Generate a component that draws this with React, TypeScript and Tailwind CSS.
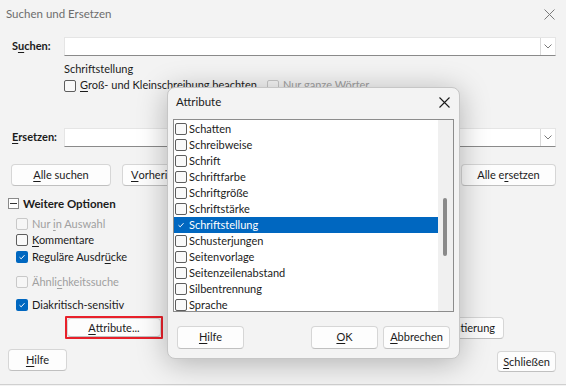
import React from "react";

const F = { fontFamily: 'Lato, "Noto Sans", sans-serif' };

function U({ c }: { c: string }) {
  return <span className="underline underline-offset-2 decoration-1">{c}</span>;
}

function Box({ checked, disabled }: { checked?: boolean; disabled?: boolean }) {
  if (checked)
    return (
      <span className="flex h-[12px] w-[12px] shrink-0 items-center justify-center rounded-[2px] bg-[#0067c0]">
        <svg width="8" height="8" viewBox="0 0 8 8">
          <path d="M1.5 4.2 L3.2 5.8 L6.5 2.2" stroke="#fff" strokeWidth="1" fill="none" />
        </svg>
      </span>
    );
  return (
    <span
      className={
        "block h-[12px] w-[12px] shrink-0 rounded-[2px] border " +
        (disabled ? "border-[#c8c8c8] bg-[#f6f6f6]" : "border-[#5d5d5d] bg-[#f9f9f9]")
      }
    />
  );
}

function Btn({ children, className }: { children: React.ReactNode; className?: string }) {
  return (
    <div
      className={
        "flex items-center justify-center whitespace-nowrap rounded-[4px] border border-[#d6d6d6] border-b-[#c0c0c0] bg-[#fdfdfd] text-[11px] text-[#1b1b1b] " +
        (className || "")
      }
    >
      {children}
    </div>
  );
}

function Combo() {
  return (
    <div className="flex h-[19px] flex-1 items-stretch border border-[#e5e5e5] border-b-[#8a8a8a] bg-white">
      <div className="flex-1" />
      <div className="flex w-[15px] items-center justify-center border-l border-[#d9d9d9]">
        <svg width="8" height="5" viewBox="0 0 8 5">
          <path d="M0.5 0.5 L4 4 L7.5 0.5" stroke="#7a7a7a" strokeWidth="1" fill="none" />
        </svg>
      </div>
    </div>
  );
}

function Check({
  label,
  checked,
  disabled,
  className,
}: {
  label: React.ReactNode;
  checked?: boolean;
  disabled?: boolean;
  className?: string;
}) {
  return (
    <div
      className={
        "flex items-center gap-[4px] whitespace-nowrap text-[11px] " +
        (disabled ? "text-[#a0a0a0] " : "text-[#1b1b1b] ") +
        (className || "")
      }
    >
      <Box checked={checked} disabled={disabled} />
      <span>{label}</span>
    </div>
  );
}

const items = [
  "Schatten",
  "Schreibweise",
  "Schrift",
  "Schriftfarbe",
  "Schriftgröße",
  "Schriftstärke",
  "Schriftstellung",
  "Schusterjungen",
  "Seitenvorlage",
  "Seitenzeilenabstand",
  "Silbentrennung",
  "Sprache",
];

export default function App() {
  return (
    <div style={F} className="relative h-[386px] w-[566px] overflow-hidden bg-[#f3f3f3] text-[#1b1b1b]">
      <div className="flex h-[385px] flex-col border-b border-[#d0d0d0]">
        {/* title */}
        <div className="flex h-[28px] items-center justify-between pl-[6px] pr-[11px]">
          <span className="text-[11.5px] text-[#6d6d6d]">Suchen und Ersetzen</span>
          <svg width="11" height="11" viewBox="0 0 11 11">
            <path d="M0.5 0.5 L10.5 10.5 M10.5 0.5 L0.5 10.5" stroke="#7a7a7a" strokeWidth="1" />
          </svg>
        </div>
        {/* Suchen */}
        <div className="mt-[9px] flex items-center pr-[10px]">
          <span className="w-[64px] pl-[12px] text-[11px] font-bold">
            S<U c="u" />chen:
          </span>
          <Combo />
        </div>
        <div className="mt-[4px] pl-[64px] text-[11px] leading-[17px]">Schriftstellung</div>
        <div className="flex h-[17px] items-center gap-[10px] pl-[64px]">
          <Check label={<><U c="G" />roß- und Kleinschreibung beachten</>} />
          <Check disabled label={<>Nur ganze Wörter</>} />
        </div>
        {/* Ersetzen */}
        <div className="mt-[34px] flex items-center pr-[10px]">
          <span className="w-[64px] pl-[12px] text-[11px] font-bold">
            <U c="E" />rsetzen:
          </span>
          <Combo />
        </div>
        {/* buttons */}
        <div className="mt-[17px] flex items-center gap-[11px] pl-[11px] pr-[10px]">
          <Btn className="h-[22px] w-[100px]">
            <U c="A" />lle suchen
          </Btn>
          <Btn className="h-[22px] w-[110px] justify-start pl-[8px]">
            <U c="V" />orherige suchen
          </Btn>
          <div className="flex-1" />
          <Btn className="h-[22px] w-[95px]">
            Alle e<U c="r" />setzen
          </Btn>
        </div>
        {/* weitere optionen */}
        <div className="mt-[9px] flex items-center gap-[4px] pl-[8px]">
          <span className="flex h-[11px] w-[11px] items-center justify-center border border-[#8a8a8a] bg-white">
            <span className="block h-[1px] w-[7px] bg-[#333]" />
          </span>
          <span className="text-[11.5px] font-bold">Weitere Optionen</span>
        </div>
        <div className="mt-[4px] flex flex-col pl-[16px]">
          <Check disabled className="h-[16px]" label={<>Nur <U c="i" />n Auswahl</>} />
          <Check className="h-[16px]" label={<><U c="K" />ommentare</>} />
          <Check checked className="mt-[1px] h-[16px]" label={<>Reguläre Ausdr<U c="ü" />cke</>} />
          <Check disabled className="mt-[9px] h-[16px]" label={<>Ähnli<U c="c" />hkeitssuche</>} />
          <Check checked className="mt-[7px] h-[16px]" label={<>Diakritisch-sensitiv</>} />
        </div>
        <div className="mt-[3px] flex items-center pr-[62px]">
          <div className="ml-[65px] rounded-[1px] border-2 border-[#e8202a]">
            <Btn className="h-[19px] w-[94px] rounded-[2px]">
              <U c="A" />ttribute...
            </Btn>
          </div>
          <div className="flex-1" />
          <Btn className="h-[22px] w-[100px] justify-end pr-[8px]">Formatierung</Btn>
        </div>
        <div className="mt-[10px] flex items-start justify-between pl-[8px] pr-[10px]">
          <Btn className="h-[22px] w-[59px]">
            <U c="H" />ilfe
          </Btn>
          <Btn className="mt-[2px] h-[21px] w-[59px]">
            <U c="S" />chließen
          </Btn>
        </div>
      </div>

      {/* Attribute dialog */}
      <div className="absolute left-[167px] top-[87px] flex h-[272px] w-[293px] flex-col rounded-[8px] border border-[#c6c6c6] bg-[#f3f3f3] shadow-[0_4px_30px_rgba(0,0,0,0.28)]">
        <div className="flex h-[28px] items-center justify-between pl-[8px] pr-[9px]">
          <span className="text-[11.5px]">Attribute</span>
          <svg width="11" height="11" viewBox="0 0 11 11">
            <path d="M0.5 0.5 L10.5 10.5 M10.5 0.5 L0.5 10.5" stroke="#1b1b1b" strokeWidth="1.1" />
          </svg>
        </div>
        <div className="ml-[5px] mt-[3px] flex h-[193px] w-[281px] border border-[#8c8c8c] bg-white">
          <div className="flex flex-1 flex-col pt-[1px]">
            {items.map((it) => {
              const sel = it === "Schriftstellung";
              return (
                <div
                  key={it}
                  className={
                    "flex h-[16px] items-center gap-[2px] pl-[1px] text-[11px] " +
                    (sel ? "bg-[#0067c0] text-white" : "")
                  }
                >
                  {sel ? (
                    <span className="flex h-[12px] w-[12px] items-center justify-center">
                      <svg width="8" height="8" viewBox="0 0 8 8">
                        <path d="M1.5 4.2 L3.2 5.8 L6.5 2.2" stroke="#fff" strokeWidth="1" fill="none" />
                      </svg>
                    </span>
                  ) : (
                    <Box />
                  )}
                  <span>{it}</span>
                </div>
              );
            })}
          </div>
          <div className="flex w-[15px] flex-col bg-[#f0f0f0] pt-[78px]">
            <div className="ml-[5px] h-[58px] w-[4px] rounded-[2px] bg-[#8a8a8a]" />
          </div>
        </div>
        <div className="mt-[14px] flex items-center px-[9px]">
          <Btn className="h-[23px] w-[67px]">
            <U c="H" />ilfe
          </Btn>
          <div className="flex-1" />
          <Btn className="h-[23px] w-[67px] border-[#0067c0] border-b-[#0067c0]">
            <U c="O" />K
          </Btn>
          <Btn className="ml-[5px] h-[23px] w-[67px]">
            <U c="A" />bbrechen
          </Btn>
        </div>
      </div>
    </div>
  );
}
